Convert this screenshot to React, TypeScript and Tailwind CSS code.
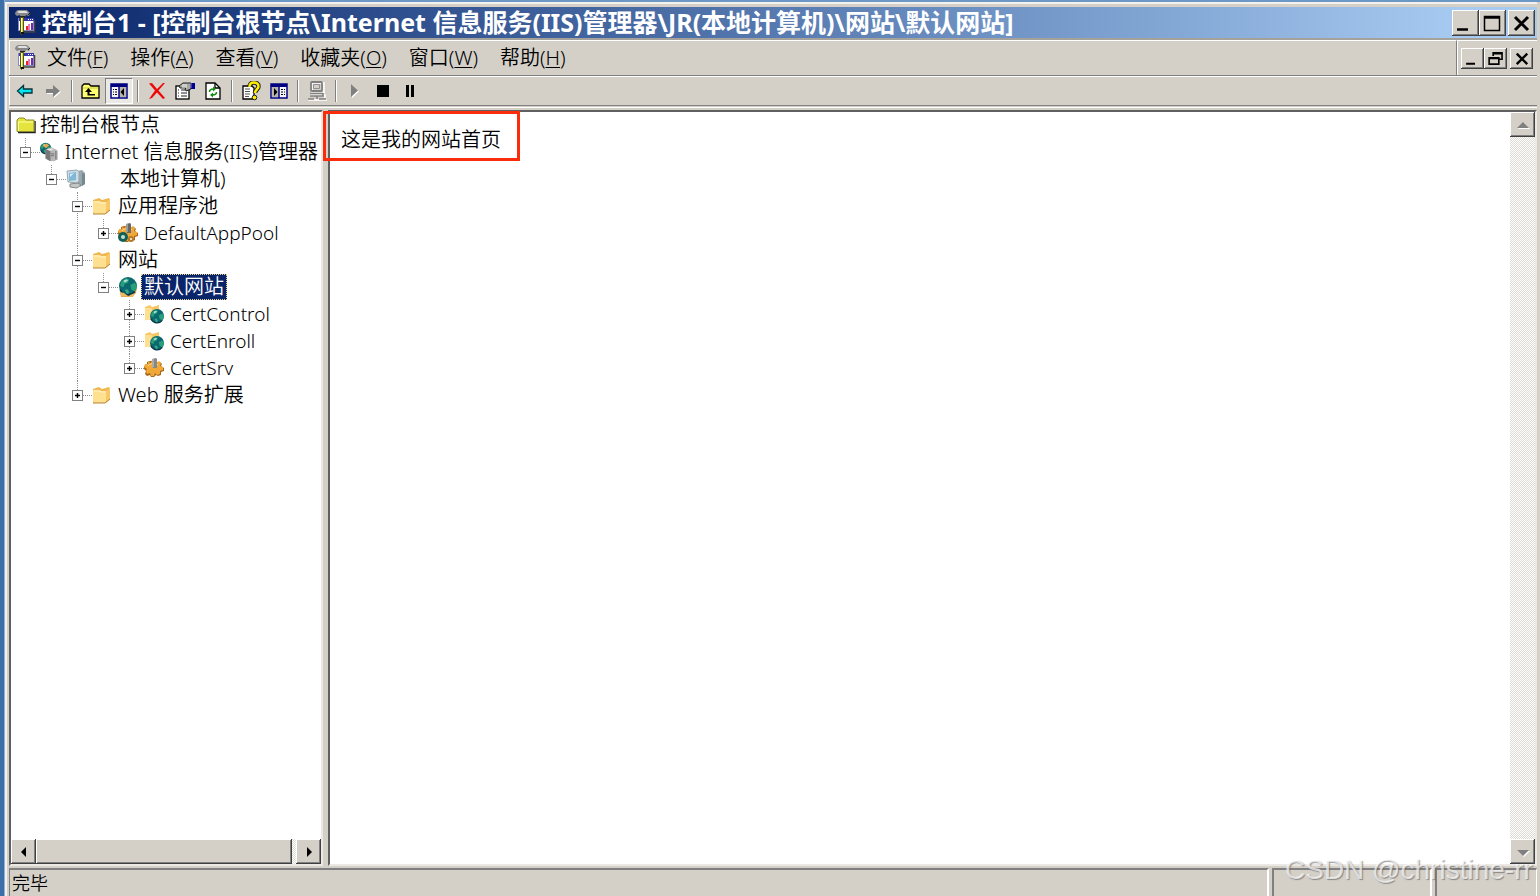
import type { ReactNode } from 'react'
import clsx from 'clsx'

const raised = 'bg-[#d4d0c8] shadow-[inset_-1px_-1px_0_#404040,inset_1px_1px_0_#fff,inset_-2px_-2px_0_#808080]'
const sunken = 'border-2 border-t-[#606060] border-l-[#606060] border-r-[#ece9e4] border-b-[#ece9e4]'
const track = 'bg-[repeating-conic-gradient(#dedbd5_0_25%,#fff_0_50%)] bg-size-[2px_2px]'

function ConsoleIcon() {
  return (
    <svg width="21" height="28" viewBox="0 0 21 28" className="shrink-0">
      <path d="M19.500 11v12H6" fill="none" stroke="#444" strokeWidth="1.500" />
      <rect x="3.500" y="9.500" width="15" height="12" fill="#fff" stroke="#8888c0" />
      <rect x="4" y="9" width="15" height="3" fill="#3838a8" />
      <path d="M13 10.500h1M15 10.500h1M17 10.500h1" stroke="#fff" />
      <path d="M11 21v-4h2v4z" fill="#e02828" />
      <path d="M13 21v-6h2v6z" fill="#e878b0" />
      <path d="M16 21v-7h2v7z" fill="#7828b0" />
      <path d="M0 5c0-2 1-3 3-4h9l3 3-1 3-3-1-1 2H5V6L2 7z" fill="#888" />
      <path d="M2 3l2-1h7l2 2H4z" fill="#e0e0e0" />
      <path d="M5 7.500h5M13 6l2-2" stroke="#222" />
      <path d="M5.500 8.500h3v15l-2 2-1-1z" fill="#d0d048" stroke="#555518" />
      <path d="M6.500 9v14" stroke="#ffff9c" />
      <path d="M6 24h3" stroke="#111" strokeWidth="2" />
    </svg>
  )
}

function ArrowIcon({ disabled }: { disabled?: boolean }) {
  if (disabled) {
    return (
      <svg width="18" height="14" viewBox="0 0 18 14">
        <path d="M3 6h7V2l7 6-7 6v-4H3z" fill="#fff" />
        <path d="M2 5h7V1l7 6-7 6V9H2z" fill="#808080" />
      </svg>
    )
  }
  return (
    <svg width="18" height="14" viewBox="0 0 18 14">
      <path d="M1.500 7l6-5.500V5H16v4H7.500v3.500z" fill="#00e8f0" stroke="#083038" strokeWidth="1.300" />
    </svg>
  )
}

function FolderUpIcon() {
  return (
    <svg width="20" height="18" viewBox="0 0 20 18">
      <path d="M1 16V4l2-2h5l2 2h8v12z" fill="#ffff70" stroke="#000" strokeWidth="1.300" />
      <path d="M2 6h15" stroke="#c8c840" />
      <path d="M7.500 6L4 10h2.500v3.500H14V12H8.500v-2H11z" fill="#000" />
    </svg>
  )
}

function PaneIcon({ flip }: { flip?: boolean }) {
  return (
    <svg width="18" height="16" viewBox="0 0 18 16" className={flip ? '-scale-x-100' : ''}>
      <rect x="1" y="1" width="16" height="14" fill="#f4f4fc" stroke="#000080" strokeWidth="1.500" />
      <path d="M1 2.500h16" stroke="#000080" strokeWidth="3" />
      <rect x="9" y="4" width="7" height="10" fill="#b8b4ac" />
      <path d="M9 3v12" stroke="#000080" strokeWidth="1.500" />
      <path d="M3 6.500h1M5 6.500h2M3 9h1M5 9h2M3 11.500h1M5 11.500h2" stroke="#000" />
      <path d="M14 5v8l-3.500-4z" fill="#000" />
    </svg>
  )
}

function DeleteIcon() {
  return (
    <svg width="18" height="18" viewBox="0 0 18 18">
      <path d="M1 1.500l3-.5 5 6 6-6h2l-6.500 7.500L17 16l-2 1-6-6.500L4 16l-3 1 6-8.500z" fill="#f00808" />
    </svg>
  )
}

function PropertiesIcon() {
  return (
    <svg width="20" height="18" viewBox="0 0 20 18">
      <rect x="1" y="4" width="13" height="13" fill="#fff" stroke="#000" strokeWidth="1.300" />
      <path d="M3 8h1M6 8h4M3 11h1M6 11h6M3 14h1M6 14h6" stroke="#222" />
      <path d="M4 4l4-3h8v6l-5 2-1-2 1-1H5z" fill="#a8a8a0" stroke="#202020" />
      <path d="M7 3h5M7 5h5" stroke="#f4f4f4" />
      <path d="M16 1h4v6h-4z" fill="#000090" />
      <path d="M16 1v5" stroke="#7878c8" />
    </svg>
  )
}

function RefreshIcon() {
  return (
    <svg width="16" height="18" viewBox="0 0 16 18">
      <path d="M1 1h9l5 5v11H1z" fill="#fff" stroke="#000" strokeWidth="1.300" />
      <path d="M10 1v5h5" fill="none" stroke="#000" strokeWidth="1.300" />
      <path d="M4.500 10c0-2 1.500-3 4-3" fill="none" stroke="#109010" strokeWidth="1.500" />
      <path d="M8 4.500L11 7 8 9.500z" fill="#109010" />
      <path d="M11.500 10c0 2-1.500 3-4 3" fill="none" stroke="#109010" strokeWidth="1.500" />
      <path d="M8 10.500L5 13l3 2.500z" fill="#109010" />
    </svg>
  )
}

function HelpIcon() {
  return (
    <svg width="20" height="20" viewBox="0 0 20 20">
      <path d="M2 5h9l2 2v11H2z" fill="#fff" stroke="#000" strokeWidth="1.300" />
      <path d="M4 8h5M4 10.500h5M4 13h5M4 15.500h4" stroke="#555" />
      <path d="M8.500 6c0-3 2-4.500 4.500-4.500S17.500 3 17.500 5.500 14 9 14 12" fill="none" stroke="#222" strokeWidth="4.500" />
      <path d="M8.500 6c0-3 2-4.500 4.500-4.500S17.500 3 17.500 5.500 14 9 14 12" fill="none" stroke="#ffee00" strokeWidth="2.500" />
      <circle cx="13.500" cy="16.500" r="2.300" fill="#ffee00" stroke="#222" />
    </svg>
  )
}

function ComputerIcon() {
  return (
    <svg width="20" height="20" viewBox="0 0 20 20" fill="none">
      <path d="M5 2h12v10H5zM3 14h15v3M1 19h19" stroke="#fff" strokeWidth="1.500" />
      <rect x="4" y="1" width="11" height="9" rx="1" stroke="#808080" strokeWidth="1.800" />
      <path d="M6.500 3.500h6v4h-6z" stroke="#909090" />
      <path d="M3 12.500h13M3 15h13V12M10 15v3M1 18h6M12 18h7" stroke="#808080" strokeWidth="1.600" />
    </svg>
  )
}

function PlayIcon() {
  return (
    <svg width="10" height="16" viewBox="0 0 10 16">
      <path d="M2 2v13l7-6.500z" fill="#fff" />
      <path d="M1 1v13l7-6.500z" fill="#808080" />
    </svg>
  )
}

function StopIcon() {
  return (
    <svg width="12" height="12" viewBox="0 0 12 12">
      <rect width="12" height="12" />
    </svg>
  )
}

function PauseIcon() {
  return (
    <svg width="12" height="12" viewBox="0 0 12 12">
      <path d="M1 0h3v12H1zM6 0h3v12H6z" />
    </svg>
  )
}

function RootFolder() {
  return (
    <svg width="20" height="20" viewBox="0 0 20 20">
      <path d="M2 17.500h17V6" fill="none" stroke="#222" strokeWidth="1.500" />
      <path d="M1 16.500V5l2-2h5l2 2h8v11.500z" fill="#e4e43c" stroke="#8c8c30" />
      <path d="M2 7h15M2.500 7v9" stroke="#ffffa8" />
    </svg>
  )
}

function Folder() {
  return (
    <svg width="20" height="20" viewBox="0 0 20 20">
      <path d="M1 4l6-2 3 2 7-2 1 2v10l-5 4H1z" fill="#f0b850" />
      <path d="M1 5h7l1 1h5v12H2L1 16z" fill="#ffe090" />
      <path d="M14 6l4-3v11l-4 4z" fill="#f8c868" />
      <path d="M1 18h12l5-4" fill="none" stroke="#b88430" />
      <path d="M2 6h6l1 1h5" fill="none" stroke="#fff4c8" />
    </svg>
  )
}

function Globe({ x, y, r }: { x: number; y: number; r: number }) {
  return (
    <g transform={`translate(${x} ${y}) scale(${r / 8})`}>
      <circle r="8" fill="#0c6870" />
      <path d="M-6-4l4-3 3 1-1 3-3 1-1 3-3-1zM2-1l4-2 2 3-2 5-3-2z" fill="#28a078" />
      <path d="M-3 3l3 0 1 3-2 1z" fill="#38a888" />
      <path d="M-4-5l3-1 1 1-3 2z" fill="#b0e0d8" />
      <path d="M-7 3c2 5 9 7 13 2" fill="none" stroke="#083848" strokeWidth="1.500" />
    </g>
  )
}

function IisIcon() {
  return (
    <svg width="20" height="20" viewBox="0 0 20 20">
      <Globe x={6} y={6} r={6} />
      <path d="M3 3l4-2 3 2-4 3z" fill="#e8a850" />
      <path d="M6 7l6-2 4 2v12l-4 1-6-3z" fill="#a8a8a8" />
      <path d="M6 7l5 2v11l-5-3z" fill="#787878" />
      <path d="M12 6l5 1 2 2v9l-4 2-3-1z" fill="#b8b8b8" />
      <path d="M7 7l5-1 3 1-4 2z" fill="#e4e4e4" />
      <path d="M12 12h3M12 14h3M17 9v9" stroke="#686868" />
    </svg>
  )
}

function ServerIcon() {
  return (
    <svg width="20" height="20" viewBox="0 0 20 20">
      <path d="M11 2l5-1 3 3v11l-5 3-3-2z" fill="#98a8b0" />
      <path d="M16 4l3 1v10l-3 2z" fill="#788890" />
      <path d="M1 2l10-1 2 2v9l-2 2-9-1z" fill="#d0dce4" stroke="#98a8b0" />
      <path d="M3 4l7-1v8l-7 1z" fill="#80b8d8" />
      <path d="M4 5l4-1-4 4z" fill="#d8f0fc" />
      <path d="M4 15l8-1 3 2-4 3-7-1z" fill="#c4c8c4" stroke="#808888" />
    </svg>
  )
}

function Gear() {
  return (
    <g>
      <path d="M9 3h3l1 2 3-1 2 2-1 2 3 2v3l-3 1v3l-3 1-2-1-2 2H7l-1-2-3 1-2-2 1-3-2-2V8l3-1V4l3-1z" fill="#a86818" />
      <path d="M8 2h3l1 3 3-2 2 2-1 3 3 1v3l-3 1v3l-3 1-2-2-1 3H7l-1-3-3 1-1-3 1-2-3-2 1-3 3 0V4l3 1z" fill="#f0a838" />
      <path d="M4 8c2-3 7-3 10-1" fill="none" stroke="#ffdc90" />
    </g>
  )
}

function AppIcon() {
  return (
    <svg width="20" height="20" viewBox="0 0 20 20">
      <Gear />
      <path d="M8 1l4-1 1 1v9H9l-1-2z" fill="#888" />
      <path d="M9 1v8" stroke="#d0d0d0" />
    </svg>
  )
}

function PoolIcon() {
  return (
    <svg width="20" height="20" viewBox="0 0 20 20">
      <Gear />
      <path d="M8 1l4-1 1 1v9H9l-1-2z" fill="#686868" />
      <path d="M9 1v8" stroke="#d0d0d0" />
      <circle cx="5" cy="14" r="5" fill="#146058" />
      <circle cx="5" cy="14" r="2" fill="#c0e0d0" />
      <circle cx="13" cy="16" r="3" fill="#b87820" />
      <circle cx="13" cy="16" r="1" fill="#fff" />
    </svg>
  )
}

function SiteIcon() {
  return (
    <svg width="20" height="20" viewBox="0 0 20 20">
      <path d="M2 15h12l5-4-1 5-4 4H3z" fill="#e8a850" />
      <Globe x={10} y={9} r={9} />
      <path d="M2 15l4 1 4 3H3zM12 18l5-2-2 4h-4z" fill="#f0b860" />
    </svg>
  )
}

function VirtualDirIcon() {
  return (
    <svg width="20" height="20" viewBox="0 0 20 20">
      <path d="M1 3l5-2 2 2 7-2v6l-6 9H1z" fill="#f8c868" />
      <path d="M1 4h6l1 2v10H1z" fill="#ffe090" />
      <Globe x={13} y={12} r={7} />
    </svg>
  )
}

type Node = {
  label: string
  icon: ReactNode
  size?: 'latin'
  indent?: boolean
  selected?: boolean
  children?: Node[]
}

const tree: Node[] = [
  {
    label: 'Internet 信息服务(IIS)管理器',
    icon: <IisIcon />,
    children: [
      {
        label: '本地计算机)',
        icon: <ServerIcon />,
        indent: true,
        children: [
          {
            label: '应用程序池',
            icon: <Folder />,
            children: [{ label: 'DefaultAppPool', icon: <PoolIcon />, size: 'latin' }],
          },
          {
            label: '网站',
            icon: <Folder />,
            children: [
              {
                label: '默认网站',
                icon: <SiteIcon />,
                selected: true,
                children: [
                  { label: 'CertControl', icon: <VirtualDirIcon />, size: 'latin' },
                  { label: 'CertEnroll', icon: <VirtualDirIcon />, size: 'latin' },
                  { label: 'CertSrv', icon: <AppIcon />, size: 'latin' },
                ],
              },
            ],
          },
          { label: 'Web 服务扩展', icon: <Folder /> },
        ],
      },
    ],
  },
]

function TreeItem({ node, last }: { node: Node; last: boolean }) {
  const open = !!node.children
  return (
    <li className="relative">
      {/* connector to the parent and the next sibling */}
      <span className={clsx('absolute left-[5px] top-0 border-l border-dotted border-[#909090]', last ? 'h-[13px]' : 'h-full')} />
      <div className="flex h-[27px] items-center">
        <button
          aria-label={open ? 'Collapse' : 'Expand'}
          className="relative mt-[2px] h-[11px] w-[11px] shrink-0 border border-[#808080] bg-white"
        >
          <svg viewBox="0 0 9 9" className="h-[9px] w-[9px]">
            <path d={open ? 'M2 4.500h5' : 'M2 4.500h5M4.500 2v5'} stroke="#000" strokeWidth="1.400" />
          </svg>
        </button>
        <span className="mt-[2px] w-[9px] shrink-0 border-t border-dotted border-[#909090]" />
        {node.icon}
        <span
          className={clsx(
            'whitespace-nowrap px-[3px] leading-[26px]',
            node.size === 'latin' ? 'text-[19px]' : 'text-[20px]',
            node.indent ? 'ml-[31px]' : 'ml-[3px]',
            node.selected && 'bg-[#0a246a] text-white outline outline-dotted -outline-offset-1 outline-[#e8d890]',
          )}
        >
          {node.label}
        </span>
      </div>
      {node.children && (
        <ul className="pl-[26px]">
          {node.children.map((c, i) => (
            <TreeItem key={c.label} node={c} last={i === node.children!.length - 1} />
          ))}
        </ul>
      )}
    </li>
  )
}

const menus = [
  ['文件', 'F'],
  ['操作', 'A'],
  ['查看', 'V'],
  ['收藏夹', 'O'],
  ['窗口', 'W'],
  ['帮助', 'H'],
]

const toolGroups: { label: string; icon: ReactNode; pressed?: boolean }[][] = [
  [
    { label: '后退', icon: <ArrowIcon /> },
    { label: '前进', icon: <ArrowIcon disabled /> },
  ],
  [
    { label: '上移一级', icon: <FolderUpIcon /> },
    { label: '显示控制台树', icon: <PaneIcon />, pressed: true },
  ],
  [
    { label: '删除', icon: <DeleteIcon /> },
    { label: '属性', icon: <PropertiesIcon /> },
    { label: '刷新', icon: <RefreshIcon /> },
  ],
  [
    { label: '帮助', icon: <HelpIcon /> },
    { label: '操作窗格', icon: <PaneIcon flip /> },
  ],
  [{ label: '连接', icon: <ComputerIcon /> }],
  [
    { label: '启动', icon: <PlayIcon /> },
    { label: '停止', icon: <StopIcon /> },
    { label: '暂停', icon: <PauseIcon /> },
  ],
]

const glyphs = {
  min: <path d="M5 19.500h11" strokeWidth="2.500" />,
  max: <path d="M5.500 6.500h15v14h-15zM5 8h16" strokeWidth="1.500" />,
  restore: <path d="M10 10V6h11v8h-4M10 7h11M5 12h12v8H5zM5 13h12" strokeWidth="2" />,
  close: <path d="M7 7l13 13M20 7L7 20" strokeWidth="3" />,
}

function WindowButton({ glyph, label, small }: { glyph: keyof typeof glyphs; label: string; small?: boolean }) {
  return (
    <button aria-label={label} className={clsx('flex items-center justify-center', raised, small ? 'h-[21px] w-[23px]' : 'h-[26px] w-[27px]')}>
      <svg viewBox="0 0 27 26" className={small ? 'h-[21px] w-[22px]' : 'h-[26px] w-[27px]'} fill="none" stroke="#000">
        {glyphs[glyph]}
      </svg>
    </button>
  )
}

function ScrollButton({ d, label, disabled }: { d: string; label: string; disabled?: boolean }) {
  return (
    <button aria-label={label} className={clsx('flex h-[25px] w-[25px] shrink-0 items-center justify-center', raised)}>
      <svg width="14" height="14" viewBox="0 0 14 14">
        {disabled && <path d={d} fill="#fff" transform="translate(1 1)" />}
        <path d={d} fill={disabled ? '#808080' : '#000'} />
      </svg>
    </button>
  )
}

export default function App() {
  return (
    <div className="relative flex h-screen overflow-hidden bg-[#d4d0c8] font-['Noto_Sans','Noto_Sans_CJK_SC',sans-serif] text-black">
      <div className="w-[5px] shrink-0 border-r border-[#8fb0d4] bg-[#3c6ea8]" />
      <div className="flex min-w-0 flex-1 flex-col border-t-2 border-[#6d97c4] pr-[3px]">
        <div className="flex min-h-0 flex-1 flex-col border-l-2 border-t-2 border-[#f4f2ee] pl-[2px] pt-[3px]">
          <header className="flex h-[31px] shrink-0 items-center bg-linear-to-r from-[#0a246a] to-[#a6caf0] to-95% pl-[6px] pr-[2px]">
            <ConsoleIcon />
            <h1 className="ml-[6px] flex-1 whitespace-nowrap text-[25px] font-bold leading-[31px] text-white">
              控制台1 - [控制台根节点\Internet 信息服务(IIS)管理器\JR(本地计算机)\网站\默认网站]
            </h1>
            <WindowButton glyph="min" label="最小化" />
            <WindowButton glyph="max" label="最大化" />
            <span className="w-[2px]" />
            <WindowButton glyph="close" label="关闭" />
          </header>

          <div className="flex h-[38px] shrink-0 border-b border-t-2 border-b-[#808080] border-t-[#a5a29c]">
            <nav className="flex flex-1 items-center border-l border-t border-white pl-[5px]">
              <ConsoleIcon />
              <div className="flex">
                {menus.map(([text, key]) => (
                  <button key={key} className="px-[11px] text-[20px] font-[350] leading-[30px]">
                    {text}(<span className="underline decoration-1 underline-offset-2">{key}</span>)
                  </button>
                ))}
              </div>
            </nav>
            <div className="flex items-center border-l border-t border-l-[#808080] border-t-white pr-[4px]">
              <span className="mr-[3px] h-full border-l border-white" />
              <WindowButton small glyph="min" label="最小化子窗口" />
              <WindowButton small glyph="restore" label="还原子窗口" />
              <span className="w-[3px]" />
              <WindowButton small glyph="close" label="关闭子窗口" />
            </div>
          </div>

          <div className="flex h-[30px] shrink-0 items-center border-b border-l border-t border-b-[#808080] border-l-white border-t-white pl-px">
            {toolGroups.map((group, i) => (
              <div key={i} className="flex items-center">
                {i > 0 && <span className="mx-1 h-[22px] w-[2px] border-l border-r border-l-[#808080] border-r-white" />}
                {group.map((tool) => (
                  <button
                    key={tool.label}
                    aria-label={tool.label}
                    className={clsx(
                      'flex h-[26px] w-7 items-center justify-center',
                      tool.pressed && 'border border-b-white border-l-[#808080] border-r-white border-t-[#808080] bg-[#ebe9e6]',
                    )}
                  >
                    {tool.icon}
                  </button>
                ))}
              </div>
            ))}
          </div>

          <main className="mt-px flex min-h-0 flex-1 border-t border-white pt-[2px]">
            <aside className={clsx('flex w-[314px] shrink-0 flex-col bg-white', sunken)}>
              <div className="flex-1 overflow-hidden font-[350]">
                <div className="flex h-[26px] items-center pl-[5px]">
                  <RootFolder />
                  <span className="ml-1 text-[20px]">控制台根节点</span>
                </div>
                <ul className="pl-[9px]">
                  {tree.map((n) => (
                    <TreeItem key={n.label} node={n} last />
                  ))}
                </ul>
              </div>
              <div className={clsx('flex h-[25px]', track)}>
                <ScrollButton label="向左滚动" d="M9 2v10L4 7z" />
                <div className={clsx('mr-1 flex-1', raised)} />
                <ScrollButton label="向右滚动" d="M5 2v10l5-5z" />
              </div>
            </aside>
            <section className={clsx('relative ml-[5px] flex flex-1 bg-white', sunken)}>
              <div className="absolute -left-[7px] -top-px h-[50px] w-[197px] border-3 border-[#fb2c0c]" />
              <p className="flex-1 pl-[11px] pt-[13px] text-[20px] font-[350] leading-[30px]">这是我的网站首页</p>
              <div className={clsx('flex w-[25px] flex-col justify-between', track)}>
                <ScrollButton disabled label="向上滚动" d="M1 10h12L7 4z" />
                <ScrollButton disabled label="向下滚动" d="M1 5h12l-6 6z" />
              </div>
            </section>
          </main>

          <footer className="mt-[2px] flex h-[28px] shrink-0 gap-[3px] text-[18px] font-[350]">
            <div className="flex-1 border-l border-r-2 border-t-2 border-l-[#808080] border-r-white border-t-[#808080] pl-[2px] leading-[26px]">完毕</div>
            <div className="w-[160px] border-l-2 border-r-2 border-t-2 border-l-[#808080] border-r-white border-t-[#808080]" />
            <div className="w-[102px] border-l-2 border-r border-t-2 border-l-[#808080] border-r-white border-t-[#808080]" />
          </footer>
        </div>
      </div>
      <div className="absolute bottom-[10px] right-[5px] w-[250px] whitespace-nowrap font-['Liberation_Sans',sans-serif] text-[28px] leading-[32px] text-white/70 [text-shadow:1px_1px_1px_rgb(90_90_90/0.6)]">
        CSDN @christine-rr
      </div>
    </div>
  )
}
